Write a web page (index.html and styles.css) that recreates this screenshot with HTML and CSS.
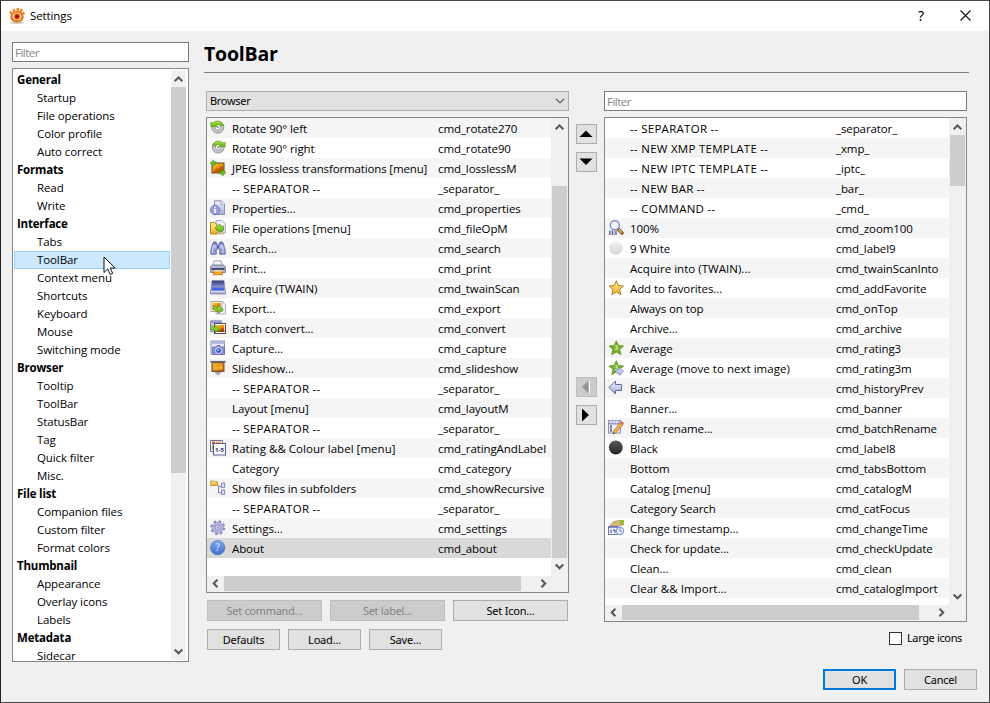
FILE: index.html
```html
<!DOCTYPE html>
<html lang="en">
<head>
<meta charset="utf-8">
<title>Settings</title>
<link rel="stylesheet" href="styles.css">
</head>
<body>
<svg class="defs" width="0" height="0">
  <defs>
    <linearGradient id="gold" x2="0" y2="1"><stop stop-color="#fff2a0"/><stop offset="1" stop-color="#f0ac20"/></linearGradient>
    <linearGradient id="photo" x2="1" y2="1"><stop stop-color="#ffc62f"/><stop offset="1" stop-color="#c95a00"/></linearGradient>
    <linearGradient id="steel" x2="0" y2="1"><stop stop-color="#f2f4ff"/><stop offset="1" stop-color="#a4a8dc"/></linearGradient>
    <linearGradient id="navy" x2="0" y2="1"><stop stop-color="#343c78"/><stop offset="1" stop-color="#8fa0ea"/></linearGradient>
    <linearGradient id="white" x2="0" y2="1"><stop stop-color="#f4f4f4"/><stop offset="1" stop-color="#d4d4d4"/></linearGradient>
    <linearGradient id="black" x2="0" y2="1"><stop stop-color="#5a5a5a"/><stop offset="1" stop-color="#242424"/></linearGradient>
    <linearGradient id="blue" x2="0" y2="1"><stop stop-color="#7fa6ea"/><stop offset="1" stop-color="#3d6fca"/></linearGradient>
    <linearGradient id="lime" x2="0" y2="1"><stop stop-color="#b4e83c"/><stop offset="1" stop-color="#5aa81a"/></linearGradient>
    <symbol id="i-left" viewBox="0 0 16 16"><circle cx="7.800" cy="7.200" r="6" fill="#c3c7ca" stroke="#868c91" stroke-width=".8"/><circle cx="7.800" cy="7.200" r="2.800" fill="#f7f8f8" stroke="#979da1" stroke-width=".8"/><circle cx="7.800" cy="7.200" r="1" fill="#8d9397"/><path d="M.8 2l2 1C5.500.3 11 .2 13.600 5.200l-3 1.400C9.500 4 7.500 3.800 6 5l1.600 1.800H.8z" fill="url(#lime)" stroke="#6aa81c" stroke-width=".6"/></symbol>
    <symbol id="i-right" viewBox="0 0 16 16"><use href="#i-left" transform="matrix(-1 0 0 1 16 0)"/></symbol>
    <symbol id="i-lossless" viewBox="0 0 16 16"><rect x="1.500" y="2.500" width="13" height="11" fill="#73451a"/><rect x="2.500" y="3.500" width="11" height="9" fill="url(#photo)"/><path d="M3 12l3-4 2 1 3-3 2.500 2v4H3z" fill="#9b4700" opacity=".55"/><path d="M0 3l3.500-3v1.800H6v2.600H3.500v2zM16 12.500L12.500 16v-1.800H10v-2.600h2.500v-2z" fill="#68bd20" stroke="#4a8f15" stroke-width=".5"/></symbol>
    <symbol id="i-props" viewBox="0 0 16 16"><path d="M4.500.8h7L14.500 4v10.500h-10z" fill="url(#steel)" stroke="#8d91b4"/><path d="M11 1v3.300h3.500" fill="#fff" stroke="#8d91b4" stroke-width=".8"/><circle cx="5" cy="10" r="4.700" fill="#9aa0dc" stroke="#666db0" stroke-width=".8"/><path d="M5 6.800v1.500M5 9.100v4" stroke="#fff" stroke-width="1.500"/></symbol>
    <symbol id="i-files" viewBox="0 0 16 16"><path d="M6 .5h6L15.300 3.800V13H6z" fill="#f3f4fb" stroke="#8a8ea8" stroke-width=".8"/><path d="M.5 2.500h4l1.200 1.500H7V14H.5z" fill="url(#gold)" stroke="#b88423"/><path d="M6 14h7.500v-2" fill="none" stroke="#d5b15a"/><path d="M5 8l5-4v2.200h3.500v4L12 12l-2-1v1.500z" fill="url(#lime)" stroke="#418919" stroke-width=".7"/></symbol>
    <symbol id="i-search" viewBox="0 0 16 16"><path d="M2.800 3h4v2h2.400V3h4L15.200 10.500v3.700H9.700V9H6.300v5.200H.8v-3.700z" fill="#929bd2" stroke="#5a6299" stroke-width=".8"/><path d="M3.300 1.500h3v2h-3zM9.700 1.500h3v2h-3z" fill="#6b73ae"/><path d="M3.500 5L2.200 13M12.500 5l.7 8M11 5v3.500M5 5v3.500" stroke="#d9deff"/><path d="M7 7h2" stroke="#4a5190" stroke-width="1.500"/></symbol>
    <symbol id="i-print" viewBox="0 0 16 16"><path d="M4 .8h7l1.500 6h-10z" fill="#f2f3fc" stroke="#8c91ab" stroke-width=".8"/><path d="M.6 6.500l2-1.500h10.800l2 1.500v6H.6z" fill="#b5b7c9" stroke="#6b6d83" stroke-width=".8"/><path d="M1.500 8h13v2h-13z" fill="#474d77"/><path d="M4 10.500h8l.7 4.300H3.300z" fill="#f4a422" stroke="#ab7231" stroke-width=".7"/><path d="M3.800 10.800h8.400" stroke="#fff" stroke-width="1"/></symbol>
    <symbol id="i-scan" viewBox="0 0 16 16"><path d="M2 .8h12l.4 7.200H1.600z" fill="url(#navy)" stroke="#5a5d83" stroke-width=".7"/><path d="M1 8.500h14l.7 5.500H.3z" fill="#a9acc8" stroke="#777a9a" stroke-width=".7"/><path d="M2 8h12v2.400H2z" fill="#4266e0"/><path d="M1 11.700h14" stroke="#e6e7fa"/></symbol>
    <symbol id="i-export" viewBox="0 0 16 16"><path d="M6 2h7l2.500 3v9H6z" fill="#f4f5ff" stroke="#999cb5" stroke-width=".8"/><rect x="1" y="1.500" width="11" height="10" fill="#fff" stroke="#999679" stroke-width=".8"/><rect x="2.300" y="2.800" width="8.400" height="7.400" fill="url(#photo)"/><path d="M3.500 5c1 2 2.500 2.500 4.500 2.500V5.200l5.500 4.300L8 13.500v-2.300C4.500 11.200 2.500 8.500 3.500 5z" fill="url(#lime)" stroke="#3e8516" stroke-width=".6"/></symbol>
    <symbol id="i-batch" viewBox="0 0 16 16"><path d="M.5.800h11v11H.5z" fill="#c6c9ee" stroke="#7d81b5" stroke-width=".8"/><path d="M1 1.200h10v2H1z" fill="#8e93cb"/><rect x="4.500" y="3.500" width="11" height="10" fill="#fff" stroke="#5b5048"/><rect x="6" y="5" width="8.300" height="7" fill="url(#photo)"/><path d="M7 12l2-2.500 1 1 2.500-3L14.300 10v2z" fill="#8a3400" opacity=".7"/><path d="M1 5c1 2 2 2.300 4 2.300V5l4.500 4L5 13v-2.300c-4 0-5-2.700-4-5.700z" fill="url(#lime)" stroke="#3e8516" stroke-width=".5"/></symbol>
    <symbol id="i-capture" viewBox="0 0 16 16"><rect x="1" y="1" width="13.500" height="13" fill="#e6e8fa" stroke="#888cb8"/><path d="M1 1h13.500v3H1z" fill="#b4b8df"/><path d="M2.500 7h3L7 5.500h3L11.500 7h3v7.500h-12z" fill="#8b91d0" stroke="#5b619f" stroke-width=".7"/><circle cx="8.500" cy="10.500" r="3" fill="#385ece" stroke="#dce2ff"/><circle cx="8" cy="10" r="1" fill="#aacaff"/></symbol>
    <symbol id="i-slide" viewBox="0 0 16 16"><path d="M5 12h6l-3 3.300z" fill="#aeb1be" stroke="#7d8090" stroke-width=".6"/><rect x="1.500" y="2" width="13" height="10" fill="#80511f"/><rect x="2.700" y="3.200" width="10.600" height="7.600" fill="url(#photo)"/><path d="M3 9.500l3-3 1.500 1L11 5l2 2.500v2z" fill="#ffe16a" opacity=".45"/><path d="M.3 1.700h15.400" stroke="#68697e" stroke-width="1.600"/></symbol>
    <symbol id="i-rating" viewBox="0 0 16 16"><path d="M.5.500h12v11H.5z" fill="#fff" stroke="#6d6da6"/><path d="M2 1.500h3v3H2z" fill="#ee4f38"/><path d="M6 1.500h5v2H6z" fill="#f8a53c"/><path d="M1.800 5.500h1.700V10H1.800z" fill="#75b448"/><rect x="3.500" y="3.500" width="12" height="11.500" fill="#f7f8ff" stroke="#5c5e9b"/><text x="9.500" y="11.600" class="mini-rating">1-5</text></symbol>
    <symbol id="i-folders" viewBox="0 0 16 16"><path d="M.8 1h2.700l1 .8H7.500v3.700H.8z" fill="url(#gold)" stroke="#c0912c" stroke-width=".9"/><path d="M8.500 5.500v7.300h3M8.500 6.500h3" fill="none" stroke="#7b7ea6"/><path d="M11.500 3h3.200v4.500h-3.200zM11.500 10h3.200v4.500h-3.200z" fill="#dde0fa" stroke="#797da8" stroke-width=".9"/></symbol>
    <symbol id="i-gear" viewBox="0 0 16 16"><circle cx="7.800" cy="7.700" r="6.300" fill="none" stroke="#888cbb" stroke-width="2.200" stroke-dasharray="2.470 2.480"/><circle cx="7.800" cy="7.700" r="5.500" fill="#b4b8e2" stroke="#8f93c1" stroke-width=".9"/><circle cx="7.800" cy="7.700" r="2.800" fill="#cfd2f0" stroke="#8084b4" stroke-width=".9"/><circle cx="7.800" cy="7.700" r="1" fill="#8286b8"/></symbol>
    <symbol id="i-about" viewBox="0 0 16 16"><circle cx="7.700" cy="7.700" r="7.200" fill="url(#blue)" stroke="#5978ab" stroke-width=".7"/><text x="7.700" y="11.300" class="mini-help">?</text></symbol>
    <symbol id="i-zoom" viewBox="0 0 16 16"><path d="M9.500 8.500l4.500 4.500" stroke="#7d4c22" stroke-width="3.400" stroke-linecap="round"/><path d="M10.500 9.500l3.500 3.300" stroke="#dcaa65" stroke-width="1.800"/><circle cx="6.800" cy="5.200" r="4.500" fill="#f4f6ff" stroke="#8990c6" stroke-width="1.500"/><path d="M1.800 10.500v4.500M4.300 10.500v4.500M8 10.500v4.500M6.200 11.500v1M6.200 13.500v1" stroke="#51558e" stroke-width="1.300"/></symbol>
    <symbol id="i-white" viewBox="0 0 16 16"><circle cx="7.800" cy="7.800" r="6.900" fill="url(#white)"/></symbol>
    <symbol id="i-black" viewBox="0 0 16 16"><circle cx="7.800" cy="7.500" r="6.900" fill="url(#black)"/></symbol>
    <symbol id="i-fav" viewBox="0 0 16 16"><path d="M8.300.8l2.100 4.800 5.100.4-3.900 3.400 1.300 5.300-4.600-2.800-4.600 2.800L5 9.400 1.100 6l5.100-.4z" fill="url(#gold)" stroke="#b37c22" stroke-width="1" stroke-linejoin="round"/></symbol>
    <symbol id="i-star" viewBox="0 0 16 16"><path d="M8.300.8l2.100 4.800 5.100.4-3.900 3.400 1.300 5.300-4.600-2.800-4.600 2.800L5 9.400 1.100 6l5.100-.4z" fill="#76ab2b" stroke="#6c9f24" stroke-width="1" stroke-linejoin="round"/><text x="8.300" y="10.400" class="mini-star">3</text></symbol>
    <symbol id="i-starnext" viewBox="0 0 16 16"><use href="#i-star"/><path d="M8 9.500h3V7l4.700 4.300L11 15.500V13H8z" fill="#c4c7f2" stroke="#888cc0" stroke-width=".7"/></symbol>
    <symbol id="i-back" viewBox="0 0 16 16"><path d="M1 7.500L7.500 1v3.500H13.500v6H7.500V14z" fill="url(#steel)" stroke="#6266a4"/></symbol>
    <symbol id="i-rename" viewBox="0 0 16 16"><path d="M0 .5h13v3H0z" fill="#babddf" stroke="#8386b0" stroke-width=".8"/><path d="M3 .5v3M6 .5v3M9 .5v3" stroke="#fff"/><rect x=".5" y="4" width="12" height="9" fill="#f2f3ff" stroke="#8a8db1"/><path d="M3 6v5M2 6h2M2 11h2" stroke="#33344d"/><path d="M5 14l1-3.700L12.500 2.500 15 4.500 8.500 12.500z" fill="#efb04b" stroke="#a06c2e" stroke-width=".7"/><path d="M12.200 2.800L13.500 1.200 16 3l-1.300 1.900z" fill="#de6458"/><path d="M5 14l.5-1.800 1.400 1z" fill="#252525"/></symbol>
    <symbol id="i-time" viewBox="0 0 16 16"><path d="M2 6l3-4 5-1.500 5.500.5v4L10 6z" fill="#d9b680" stroke="#ac8148" stroke-width=".6"/><path d="M11.500 0H16v4.500l-4-.5z" fill="#96be29"/><rect x=".5" y="6.500" width="9.500" height="8" fill="#f4f6ff" stroke="#6f75a6"/><path d="M.5 7h9.500" stroke="#6b75b5" stroke-width="1.600"/><path d="M3 9.500v3.500M5 10h2v3" stroke="#353a71" fill="none"/><circle cx="12" cy="11" r="3.600" fill="#eaf1ff" stroke="#78a0df" stroke-width="1.200"/><path d="M12 8.700V11l1.800.8" fill="none" stroke="#4b6caf"/></symbol>
    <symbol id="up" viewBox="0 0 9 7"><path d="M.7 5.200L4.500 1.400l3.800 3.800" fill="none" stroke="#555" stroke-width="2"/></symbol>
    <symbol id="down" viewBox="0 0 9 7"><path d="M.7 1.500l3.800 3.800 3.800-3.800" fill="none" stroke="#555" stroke-width="2"/></symbol>
    <symbol id="prev" viewBox="0 0 7 9"><path d="M5.400.8L1.700 4.500l3.700 3.700" fill="none" stroke="#555" stroke-width="2"/></symbol>
    <symbol id="next" viewBox="0 0 7 9"><path d="M1.500.8l3.700 3.700-3.700 3.700" fill="none" stroke="#555" stroke-width="2"/></symbol>
  </defs>
</svg>
<div class="window">
  <header class="titlebar">
    <svg class="app-icon" viewBox="0 0 16 16"><ellipse cx="8" cy="14.800" rx="7.500" ry="1.200" fill="#d4d4d4"/><path d="M1 3.500l2.200 2.800M4.600.8l1 3.500M8.800 0v3.800M12.800 1l-1.500 3.500M15.500 4.500l-2.700 2" stroke="#ef8420" stroke-width="2.400"/><ellipse cx="8" cy="9" rx="6.800" ry="5.800" fill="#ee7c1a"/><ellipse cx="8" cy="8.500" rx="4.300" ry="3.500" fill="#ffe6c0"/><circle cx="8" cy="8.500" r="2.800" fill="#d8330f"/><circle cx="8" cy="8.500" r="1.300" fill="#8c1008"/></svg>
    <span class="title">Settings</span>
    <span class="help">?</span>
    <svg class="close" viewBox="0 0 11 11"><path d="M.5.500l10 10M10.500.500l-10 10" stroke="#111" stroke-width="1.100"/></svg>
  </header>
  <div class="body">
    <aside class="side">
      <div class="filter">Filter</div>
      <div class="tree box">
        <div class="tree-items">
          <b>General</b><span>Startup</span><span>File operations</span><span>Color profile</span><span>Auto correct</span>
          <b>Formats</b><span>Read</span><span>Write</span>
          <b>Interface</b><span>Tabs</span><span class="current">ToolBar<svg class="cursor" viewBox="0 0 13 20"><path d="M1 1v15.500l3.700-3.600 2.500 5.600 2.500-1.100-2.500-5.400h4.900z" fill="#fff" stroke="#111" stroke-width="1"/></svg></span><span>Context menu</span><span>Shortcuts</span><span>Keyboard</span><span>Mouse</span><span>Switching mode</span>
          <b>Browser</b><span>Tooltip</span><span>ToolBar</span><span>StatusBar</span><span>Tag</span><span>Quick filter</span><span>Misc.</span>
          <b>File list</b><span>Companion files</span><span>Custom filter</span><span>Format colors</span>
          <b>Thumbnail</b><span>Appearance</span><span>Overlay icons</span><span>Labels</span>
          <b>Metadata</b><span>Sidecar</span>
        </div>
        <div class="vbar"><svg class="va"><use href="#up"/></svg><i class="thumb tree-thumb"></i><svg class="va end"><use href="#down"/></svg></div>
      </div>
    </aside>
    <main class="main">
      <h1>ToolBar</h1>
      <div class="panes">
        <section class="pane">
          <div class="combo">Browser<svg viewBox="0 0 10 6"><path d="M1 .8l4 4 4-4" fill="none" stroke="#555" stroke-width="1.200"/></svg></div>
          <div class="list box current-list">
            <div class="rows">
              <div class="row"><svg><use href="#i-left"/></svg><span>Rotate 90° left</span><span>cmd_rotate270</span></div>
              <div class="row"><svg><use href="#i-right"/></svg><span>Rotate 90° right</span><span>cmd_rotate90</span></div>
              <div class="row"><svg><use href="#i-lossless"/></svg><span class="tight">JPEG lossless transformations [menu]</span><span>cmd_losslessM</span></div>
              <div class="row"><i></i><span class="sep">-- SEPARATOR --</span><span>_separator_</span></div>
              <div class="row"><svg><use href="#i-props"/></svg><span>Properties...</span><span>cmd_properties</span></div>
              <div class="row"><svg><use href="#i-files"/></svg><span>File operations [menu]</span><span>cmd_fileOpM</span></div>
              <div class="row"><svg><use href="#i-search"/></svg><span>Search...</span><span>cmd_search</span></div>
              <div class="row"><svg><use href="#i-print"/></svg><span>Print...</span><span>cmd_print</span></div>
              <div class="row"><svg><use href="#i-scan"/></svg><span>Acquire (TWAIN)</span><span>cmd_twainScan</span></div>
              <div class="row"><svg><use href="#i-export"/></svg><span>Export...</span><span>cmd_export</span></div>
              <div class="row"><svg><use href="#i-batch"/></svg><span>Batch convert...</span><span>cmd_convert</span></div>
              <div class="row"><svg><use href="#i-capture"/></svg><span>Capture...</span><span>cmd_capture</span></div>
              <div class="row"><svg><use href="#i-slide"/></svg><span>Slideshow...</span><span>cmd_slideshow</span></div>
              <div class="row"><i></i><span class="sep">-- SEPARATOR --</span><span>_separator_</span></div>
              <div class="row"><i></i><span>Layout [menu]</span><span>cmd_layoutM</span></div>
              <div class="row"><i></i><span class="sep">-- SEPARATOR --</span><span>_separator_</span></div>
              <div class="row"><svg><use href="#i-rating"/></svg><span class="loose">Rating &amp;&amp; Colour label [menu]</span><span>cmd_ratingAndLabel</span></div>
              <div class="row"><i></i><span>Category</span><span>cmd_category</span></div>
              <div class="row"><svg><use href="#i-folders"/></svg><span>Show files in subfolders</span><span>cmd_showRecursive</span></div>
              <div class="row"><i></i><span class="sep">-- SEPARATOR --</span><span>_separator_</span></div>
              <div class="row"><svg><use href="#i-gear"/></svg><span>Settings...</span><span>cmd_settings</span></div>
              <div class="row selected"><svg><use href="#i-about"/></svg><span>About</span><span>cmd_about</span></div>
            </div>
            <div class="vbar"><svg class="va"><use href="#up"/></svg><i class="thumb low-thumb"></i><svg class="va end"><use href="#down"/></svg></div>
            <div class="hbar"><svg><use href="#prev"/></svg><i class="thumb"></i><svg class="end"><use href="#next"/></svg></div>
          </div>
          <div class="buttons first"><div class="btn wide disabled">Set command...</div><div class="btn wide disabled">Set label...</div><div class="btn wide">Set Icon...</div></div>
          <div class="buttons"><div class="btn">Defaults</div><div class="btn">Load...</div><div class="btn">Save...</div></div>
        </section>
        <div class="movers">
          <div class="move"><svg viewBox="0 0 19 18"><path d="M2.500 12l6.500-6.500 6.500 6.500z"/></svg></div>
          <div class="move"><svg viewBox="0 0 19 18"><path d="M2.500 5.500h13L9 12z"/></svg></div>
          <div class="move disabled gap"><svg viewBox="0 0 19 18"><path d="M12.500 3v12.500" stroke="#fff"/><path d="M11.500 2.500v13L5 9z" fill="#969696"/></svg></div>
          <div class="move"><svg viewBox="0 0 19 18"><path d="M5 2.500v13L12 9z"/></svg></div>
        </div>
        <section class="pane available">
          <div class="filter">Filter</div>
          <div class="list box">
            <div class="rows">
              <div class="row"><i></i><span class="sep">-- SEPARATOR --</span><span>_separator_</span></div>
              <div class="row"><i></i><span class="sep">-- NEW XMP TEMPLATE --</span><span>_xmp_</span></div>
              <div class="row"><i></i><span class="sep">-- NEW IPTC TEMPLATE --</span><span>_iptc_</span></div>
              <div class="row"><i></i><span class="sep">-- NEW BAR --</span><span>_bar_</span></div>
              <div class="row"><i></i><span class="sep">-- COMMAND --</span><span>_cmd_</span></div>
              <div class="row"><svg><use href="#i-zoom"/></svg><span>100%</span><span>cmd_zoom100</span></div>
              <div class="row"><svg><use href="#i-white"/></svg><span>9 White</span><span>cmd_label9</span></div>
              <div class="row"><i></i><span class="loose">Acquire into (TWAIN)...</span><span>cmd_twainScanInto</span></div>
              <div class="row"><svg><use href="#i-fav"/></svg><span>Add to favorites...</span><span>cmd_addFavorite</span></div>
              <div class="row"><i></i><span>Always on top</span><span>cmd_onTop</span></div>
              <div class="row"><i></i><span>Archive...</span><span>cmd_archive</span></div>
              <div class="row"><svg><use href="#i-star"/></svg><span>Average</span><span>cmd_rating3</span></div>
              <div class="row"><svg><use href="#i-starnext"/></svg><span class="loose">Average (move to next image)</span><span>cmd_rating3m</span></div>
              <div class="row"><svg><use href="#i-back"/></svg><span>Back</span><span>cmd_historyPrev</span></div>
              <div class="row"><i></i><span>Banner...</span><span>cmd_banner</span></div>
              <div class="row"><svg><use href="#i-rename"/></svg><span>Batch rename...</span><span>cmd_batchRename</span></div>
              <div class="row"><svg><use href="#i-black"/></svg><span>Black</span><span>cmd_label8</span></div>
              <div class="row"><i></i><span>Bottom</span><span>cmd_tabsBottom</span></div>
              <div class="row"><i></i><span>Catalog [menu]</span><span>cmd_catalogM</span></div>
              <div class="row"><i></i><span>Category Search</span><span>cmd_catFocus</span></div>
              <div class="row"><svg><use href="#i-time"/></svg><span>Change timestamp...</span><span>cmd_changeTime</span></div>
              <div class="row"><i></i><span>Check for update...</span><span>cmd_checkUpdate</span></div>
              <div class="row"><i></i><span>Clean...</span><span>cmd_clean</span></div>
              <div class="row"><i></i><span class="loose">Clear &amp;&amp; Import...</span><span>cmd_catalogImport</span></div>
            </div>
            <div class="vbar"><svg class="va"><use href="#up"/></svg><i class="thumb short-thumb"></i><svg class="va end"><use href="#down"/></svg></div>
            <div class="hbar"><svg><use href="#prev"/></svg><i class="thumb"></i><svg class="end"><use href="#next"/></svg></div>
          </div>
          <div class="check"><i></i>Large icons</div>
        </section>
      </div>
      <footer><div class="btn primary">OK</div><div class="btn">Cancel</div></footer>
    </main>
  </div>
</div>
</body>
</html>
```
FILE: styles.css
```css
* { box-sizing: border-box; }
body {
  margin: 0;
  width: 990px;
  height: 703px;
  overflow: hidden;
  color: #000;
  font: 11.5px/18px "Open Sans", "Noto Sans", sans-serif;
  letter-spacing: -0.1px;
}
svg { display: block; flex: none; }
.defs { position: absolute; }
.window {
  width: 990px;
  height: 703px;
  border: 1px solid #4a4a4a;
  border-left-color: #24242a;
  background: #f0f0f0;
}
.titlebar {
  display: flex;
  align-items: center;
  height: 30px;
  padding: 0 18px 0 8px;
  background: #fff;
}
.app-icon { width: 16px; height: 16px; margin-top: -1px; }
.title { flex: 1; margin-left: 5px; }
.help { font: 14px/18px "Noto Sans", sans-serif; margin-right: 36px; }
.close { width: 11px; height: 11px; margin-top: -1px; }
.body { display: flex; height: 671px; padding: 11px 11px 0; }
.side { width: 177px; flex: none; }
.filter {
  height: 20px;
  border: 1px solid #7a7a7a;
  background: #fff;
  color: #858585;
  padding: 1px 2px;
  letter-spacing: -0.5px;
}
.box { border: 1px solid #828790; background: #fff; }
.tree {
  display: flex;
  height: 594px;
  margin-top: 6px;
  padding: 1px;
  padding-right: 2px;
}
.tree-items { flex: 1; height: 590px; overflow: hidden; padding: 1px 1px 0 0; }
.tree-items b, .tree-items span { display: block; height: 18px; line-height: 18px; white-space: nowrap; }
.tree-items b { padding-left: 3px; letter-spacing: -0.2px; }
.tree-items span { padding-left: 23px; }
.tree-items .current {
  position: relative;
  padding-left: 22px;
  line-height: 16px;
  border: 1px solid #99d1ff;
  background: #cce8ff;
}
.cursor { position: absolute; left: 88px; top: 4px; width: 13px; height: 20px; z-index: 1; }
.vbar { width: 15px; display: flex; flex-direction: column; align-items: center; background: #f0f0f0; }
.va { width: 9px; height: 7px; margin: 6px 0 4px; }
.va.end { margin: auto 0 5px; }
.thumb { display: block; background: #cdcdcd; }
.vbar .thumb { width: 15px; }
.tree-thumb { height: 386px; }
.low-thumb { height: 372px; margin-top: 51px; }
.short-thumb { height: 51px; }
.main { width: 773px; margin-left: 15px; flex: none; }
h1 {
  height: 31px;
  width: 765px;
  margin: 0;
  border-bottom: 1px solid #808080;
  font: bold 19.5px/24px "Open Sans", sans-serif;
  letter-spacing: -0.2px;
}
.panes { display: flex; height: 578px; padding: 18px 0 0 2px; }
.pane { width: 363px; flex: none; }
.combo {
  display: flex;
  align-items: center;
  justify-content: space-between;
  height: 20px;
  padding: 0 3px;
  border: 1px solid #adadad;
  background: #e1e1e1;
  font-family: "Noto Sans", sans-serif;
  font-size: 11px;
  letter-spacing: -0.3px;
}
.combo svg { width: 10px; height: 6px; }
.list {
  display: grid;
  grid-template-columns: 345px 15px;
  grid-template-rows: 487px 15px;
  height: 505px;
  margin-top: 6px;
  background: #f0f0f0;
}
.current-list { grid-template-rows: 458px 15px; height: 476px; }
.rows { width: 344px; background: #fff; overflow: hidden; }
.row {
  display: grid;
  grid-template-columns: 22px 206px 1fr;
  height: 20px;
  padding-left: 3px;
  line-height: 21px;
  white-space: nowrap;
}
.row svg { width: 16px; height: 16px; margin-top: 2px; }
.row .sep { letter-spacing: 0.27px; }
.row .loose { letter-spacing: 0.03px; }
.row .tight { letter-spacing: -0.14px; }
.current-list .row:nth-child(odd), .available .row:nth-child(even) { background: #f5f5f5; }
.current-list .row.selected { background: #d9d9d9; }
.list .va.end { margin: auto 0 6px; }
.available .va.end { margin-bottom: 5px; }
.hbar { display: flex; align-items: center; width: 345px; height: 15px; background: #f0f0f0; }
.hbar svg { width: 7px; height: 9px; margin: 0 5px 0 5px; }
.hbar .thumb { width: 297px; height: 15px; }
.hbar .end { margin: 0 5px 0 auto; }
.buttons { display: flex; gap: 8px; margin: 8px 0 0 1px; }
.buttons.first { margin-top: 7px; }
.btn {
  width: 73px;
  height: 21px;
  border: 1px solid #adadad;
  background: #e1e1e1;
  font: 11px/20px "Noto Sans", sans-serif;
  letter-spacing: -0.2px;
  text-align: center;
}
.btn.wide { width: 115px; }
.btn.disabled, .move.disabled { background: #ccc; border-color: #bfbfbf; color: #838383; }
.btn.disabled { letter-spacing: -0.3px; }
.btn.primary { border: 2px solid #0078d7; line-height: 18px; }
.movers { width: 21px; margin: 33px 7px 0; display: flex; flex-direction: column; gap: 8px; }
.move { width: 21px; height: 20px; border: 1px solid #adadad; background: #e1e1e1; }
.move svg { width: 19px; height: 18px; }
.move.gap { margin-top: 197px; }
.check {
  display: flex;
  justify-content: flex-end;
  align-items: center;
  gap: 5px;
  height: 14px;
  margin: 9px 5px 0 0;
  font: 11px/14px "Noto Sans", sans-serif;
  letter-spacing: -0.36px;
}
.check i { width: 13px; height: 13px; border: 1px solid #333; background: #fff; }
footer { display: flex; justify-content: flex-end; gap: 8px; margin-top: 18px; }
.mini-rating { font: bold 6px "Noto Sans", sans-serif; text-anchor: middle; fill: #303268; letter-spacing: 0; }
.mini-help { font: bold 10px "Noto Sans", sans-serif; text-anchor: middle; fill: #b9d2ff; }
.mini-star { font: bold 7px "Noto Sans", sans-serif; text-anchor: middle; fill: #d9efaf; }
```
